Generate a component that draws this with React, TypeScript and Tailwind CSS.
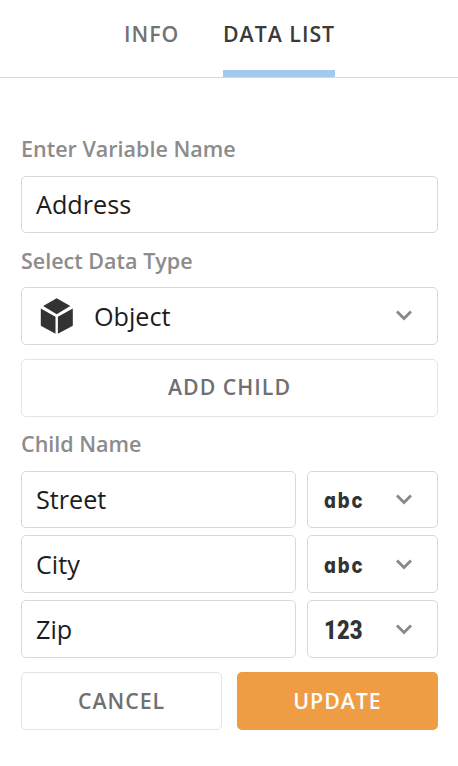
const border = "border border-[#d8d8d8] rounded-[5px]";

function Chevron() {
  return (
    <svg width="18" height="12" viewBox="0 0 18 12" fill="none" className="relative -top-px shrink-0">
      <path d="M2 2.5 L9 9.5 L16 2.5" stroke="#888888" strokeWidth="2.8" />
    </svg>
  );
}

function Cube() {
  return (
    <svg width="34" height="38" viewBox="0 0 34 38" fill="#333333" className="shrink-0">
      <path d="M16.7 1.2 L30.3 9.1 L16.7 17.2 L3.1 9.1 Z" />
      <path d="M0.8 11.5 L15.5 19.7 V36.8 L0.8 28.7 Z" />
      <path d="M32.8 11.5 L17.9 19.7 V36.8 L32.8 28.7 Z" />
    </svg>
  );
}

function Label({ children, className }: { children: string; className: string }) {
  return (
    <div className={`text-[21.5px] leading-[30px] font-semibold text-[#8c8c8c] whitespace-nowrap ${className}`}>
      {children}
    </div>
  );
}

function ChildRow({ name, type, className }: { name: string; type: string; className: string }) {
  return (
    <div className={`flex gap-[11px] ${className}`}>
      <div className={`flex w-[275px] items-center pt-[inherit] pl-[14px] ${border}`}>{name}</div>
      <div className={`flex w-[131px] items-center justify-between pl-4 pr-6 ${border}`}>
        <span
          className={`leading-none text-[#333333] ${
            type === "abc"
              ? "font-['Inter'] font-extrabold text-[20px] tracking-[2px] origin-left scale-x-[0.93] scale-y-110 [font-feature-settings:'cv11']"
              : "font-['Roboto'] font-black text-[25px] tracking-[0.2px] origin-left scale-x-[0.88]"
          }`}
        >
          {type}
        </span>
        <Chevron />
      </div>
    </div>
  );
}

export default function App() {
  return (
    <div className="h-[766px] w-[458px] overflow-hidden bg-white font-['Open_Sans',sans-serif] text-[25.2px] text-[#1c1c1c]">
      <div className="flex h-[78px] border-b border-[#d8d8d8] pl-[124px] text-[21.3px] font-semibold leading-[30px] tracking-[1px] whitespace-nowrap">
        <div className="w-[99px] pt-[19px] text-[#737373]">INFO</div>
        <div className="w-[112px] border-b-[7px] border-[#a3caec] pt-[19px] text-[#3a3a3a]">DATA LIST</div>
      </div>
      <div className="flex flex-col pl-[21px] pr-5">
        <Label className="mt-[56px]">Enter Variable Name</Label>
        <div className={`mt-[12px] flex h-[57px] items-center pl-[14px] ${border}`}>Address</div>
        <Label className="mt-[13px]">Select Data Type</Label>
        <div className={`mt-[11px] flex h-[58px] items-center pl-[18px] pr-6 ${border}`}>
          <Cube />
          <span className="ml-5 grow pt-0.5">Object</span>
          <Chevron />
        </div>
        <button className="mt-[14px] h-[58px] rounded-[5px] border border-[#e4e4e4] pb-[3px] text-[21.3px] font-semibold tracking-[1px] text-[#707070]">
          ADD CHILD
        </button>
        <Label className="mt-[12px]">Child Name</Label>
        <ChildRow className="mt-[12px] h-[57px]" name="Street" type="abc" />
        <ChildRow className="mt-[7px] h-[58px] [&>div]:pt-[2px]" name="City" type="abc" />
        <ChildRow className="mt-[7px] h-[58px] [&>div]:pt-[2px]" name="Zip" type="123" />
        <div className="mt-[14px] flex h-[58px] gap-[15px] text-[21.3px] font-semibold tracking-[1px]">
          <button className="w-[201px] rounded-[5px] border border-[#e4e4e4] pb-px text-[#707070]">CANCEL</button>
          <button className="w-[201px] rounded-[5px] bg-[#ee9d45] pb-px text-white">UPDATE</button>
        </div>
      </div>
    </div>
  );
}
